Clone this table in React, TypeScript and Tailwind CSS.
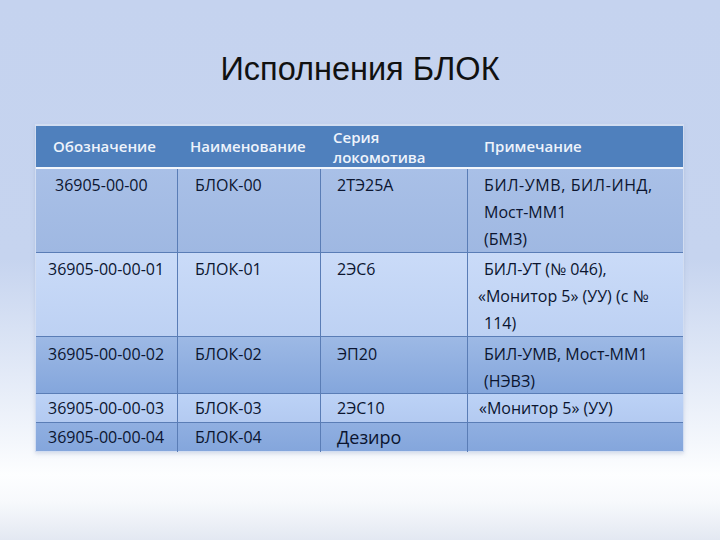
import React from "react";

const body = "font-['Open_Sans',sans-serif] text-[16px] text-[#0b1530]";

type Row = {
  h: string;
  bg: string;
  pt: string;
  c1: string;
  c1cls: string;
  c2: string;
  c3: React.ReactNode;
  c4: React.ReactNode;
  c4cls: string;
};

const rows: Row[] = [
  {
    h: "h-[83px]",
    bg: "bg-[linear-gradient(to_bottom,#a9c0e7,#9fb8e2)]",
    pt: "pt-[3px]",
    c1: "36905-00-00",
    c1cls: "pl-[19px]",
    c2: "БЛОК-00",
    c3: "2ТЭ25А",
    c4: (
      <>
        <span className="tracking-[0.6px]">БИЛ-УМВ, БИЛ-ИНД,</span>
        <br />
        Мост-ММ1
        <br />
        (БМЗ)
      </>
    ),
    c4cls: "pl-[16px]",
  },
  {
    h: "h-[84px]",
    bg: "bg-[linear-gradient(to_bottom,#cadbf8,#bdd1f3)]",
    pt: "pt-[3px]",
    c1: "36905-00-00-01",
    c1cls: "pl-[12px]",
    c2: "БЛОК-01",
    c3: "2ЭС6",
    c4: (
      <>
        БИЛ-УТ (№ 046),
        <br />
        <span className="-ml-[6px]">«Монитор 5» (УУ) (с №</span>
        <br />
        114)
      </>
    ),
    c4cls: "pl-[16px]",
  },
  {
    h: "h-[57px]",
    bg: "bg-[linear-gradient(to_bottom,#9db9e5,#84a6dc)]",
    pt: "pt-[4px]",
    c1: "36905-00-00-02",
    c1cls: "pl-[12px]",
    c2: "БЛОК-02",
    c3: "ЭП20",
    c4: (
      <>
        БИЛ-УМВ, Мост-ММ1
        <br />
        (НЭВЗ)
      </>
    ),
    c4cls: "pl-[16px]",
  },
  {
    h: "h-[29px]",
    bg: "bg-[linear-gradient(to_bottom,#bcd2f6,#b3caf1)]",
    pt: "pt-[1px]",
    c1: "36905-00-00-03",
    c1cls: "pl-[12px]",
    c2: "БЛОК-03",
    c3: "2ЭС10",
    c4: "«Монитор 5» (УУ)",
    c4cls: "pl-[11px]",
  },
  {
    h: "h-[29px]",
    bg: "bg-[linear-gradient(to_bottom,#90afe1,#84a6dc)]",
    pt: "pt-[1px]",
    c1: "36905-00-00-04",
    c1cls: "pl-[12px]",
    c2: "БЛОК-04",
    c3: <span className="text-[18px] leading-[27px] font-medium">Дезиро</span>,
    c4: "",
    c4cls: "pl-[16px]",
  },
];

export default function App() {
  return (
    <div className="w-[720px] h-[540px] overflow-hidden bg-[linear-gradient(to_bottom,#c5d3ef_0%,#c6d4ef_48%,#f4f7fc_82%,#fdfeff_88%,#f7f9fc_93%,#e3e8f2_100%)] flex flex-col">
      <div className="h-[124px] flex items-start justify-center pt-[49px]">
        <h1 className="font-['Liberation_Sans',Arial,sans-serif] text-[32.5px] leading-[40px] text-[#111111] font-normal">
          Исполнения БЛОК
        </h1>
      </div>
      <div className="ml-[35px] w-[649px] border border-[#d2ddf1] border-t-[2px] shadow-[0_2px_4px_rgba(120,140,180,0.25)]">
        <div className="grid grid-cols-[142px_143px_147px_215px] h-[43px] bg-[#4f80bd] text-[#eef3fb] font-['Open_Sans',sans-serif] font-semibold text-[15px] border-b-[2px] border-[#f2f6fc]">
          <div className="pl-[17px] flex items-center">Обозначение</div>
          <div className="pl-[12px] flex items-center">Наименование</div>
          <div className="pl-[12px] flex flex-col justify-center leading-[20px]">
            <span>Серия</span>
            <span>локомотива</span>
          </div>
          <div className="pl-[16px] flex items-center">Примечание</div>
        </div>
        {rows.map((r, i) => (
          <div
            key={i}
            className={`grid grid-cols-[142px_143px_147px_215px] ${r.h} ${r.bg} ${body} leading-[27px] ${
              i > 0 ? "border-t border-[#5a7db6]" : ""
            }`}
          >
            <div className={`${r.pt} ${r.c1cls} border-r border-[#5a7db6] whitespace-nowrap`}>{r.c1}</div>
            <div className={`${r.pt} pl-[17px] border-r border-[#5a7db6]`}>{r.c2}</div>
            <div className={`${r.pt} pl-[16px] border-r border-[#5a7db6]`}>{r.c3}</div>
            <div className={`${r.pt} ${r.c4cls} whitespace-nowrap`}>{r.c4}</div>
          </div>
        ))}
      </div>
    </div>
  );
}
